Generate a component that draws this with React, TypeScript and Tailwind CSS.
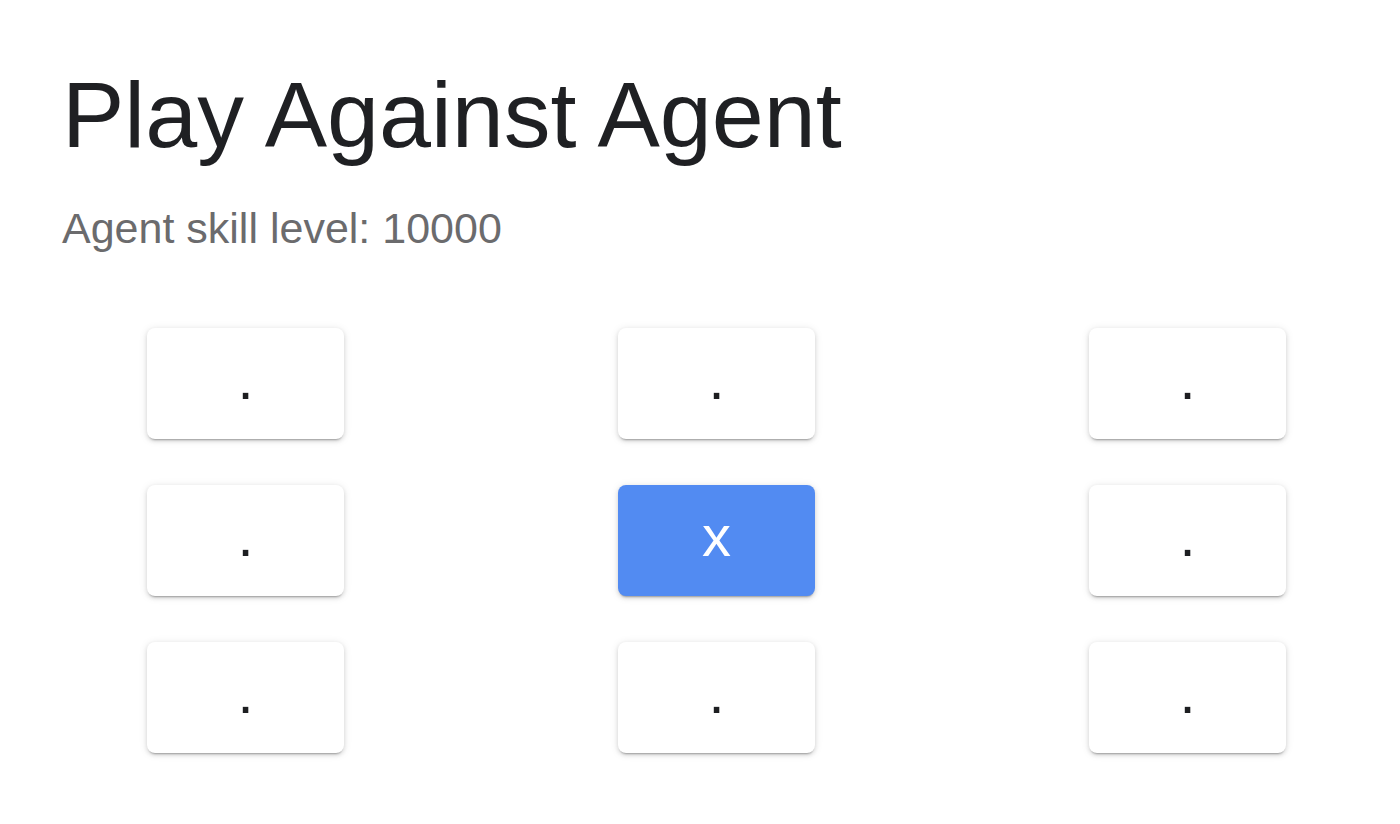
const CELLS = [".", ".", ".", ".", "x", ".", ".", ".", "."];

function Cell({ value }: { value: string }) {
  const taken = value !== ".";
  return (
    <button
      className={
        "flex h-[111px] w-[197px] items-center justify-center rounded-[8px] pb-[10px] text-[58px] shadow-[0_3px_2px_-2px_rgba(0,0,0,0.28),0_2px_4px_0_rgba(0,0,0,0.12),0_1px_9px_0_rgba(0,0,0,0.1)] " +
        (taken ? "bg-[#528bf2] text-white" : "bg-white text-[#1d1e21]")
      }
    >
      {value}
    </button>
  );
}

export default function App() {
  return (
    <div className="min-h-screen bg-white pl-[62px] pt-[68px] font-['Liberation_Sans',Arial,sans-serif]">
      <h1 className="text-[93.5px] leading-none text-[#1f2023]">Play Against Agent</h1>
      <p className="mt-[45px] text-[43px] leading-none text-[#6b6b6d]">Agent skill level: 10000</p>

      <div className="mt-[78px] ml-[85px] grid w-max grid-cols-[197px_197px_197px] gap-x-[274px] gap-y-[46px]">
        {CELLS.map((v, i) => (
          <Cell key={i} value={v} />
        ))}
      </div>
    </div>
  );
}
